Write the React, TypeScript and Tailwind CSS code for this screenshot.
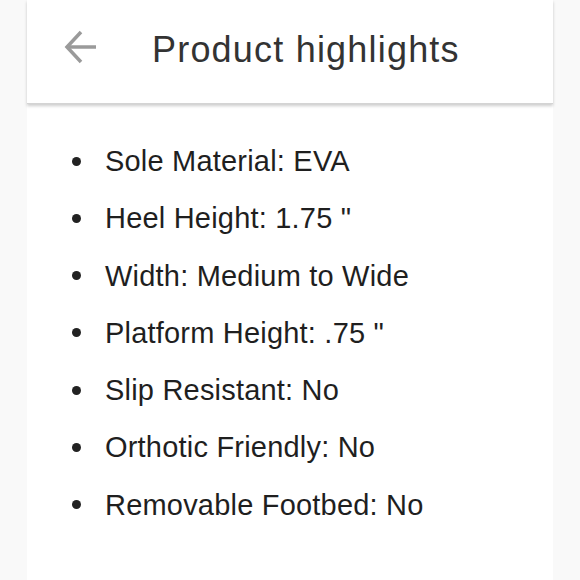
const items = [
  "Sole Material: EVA",
  'Heel Height: 1.75 "',
  "Width: Medium to Wide",
  'Platform Height: .75 "',
  "Slip Resistant: No",
  "Orthotic Friendly: No",
  "Removable Footbed: No",
];

export default function App() {
  return (
    <div className="w-[580px] h-[580px] bg-[#f9f9f9] flex justify-center overflow-hidden font-['Liberation_Sans',Arial,sans-serif]">
      <div className="w-[526px] bg-white">
        {/* Header */}
        <div className="h-[104px] flex items-start pt-[28px] shadow-[0_2px_3px_rgba(0,0,0,0.2)] border-b border-[#d4d4d4]">
          <svg className="ml-[37px] mt-[2px]" width="33" height="34" viewBox="0 0 33 34" fill="none" stroke="#9a9a9a" strokeWidth="3.5">
            <path d="M32 17 H3" />
            <path d="M17 2 L3 17 L17 32" />
          </svg>
          <h1 className="ml-[55px] text-[36px] leading-[44px] tracking-[1.2px] text-[#333]">Product highlights</h1>
        </div>
        {/* List */}
        <ul className="pt-[37px] pl-[45px] flex flex-col gap-[17.3px] text-[29px] leading-[40px] tracking-[0.2px] text-[#1f1f1f]">
          {items.map((t) => (
            <li key={t} className="flex items-center">
              <span className="w-[9px] h-[9px] rounded-full bg-[#222] mr-[24px]" />
              {t}
            </li>
          ))}
        </ul>
      </div>
    </div>
  );
}
